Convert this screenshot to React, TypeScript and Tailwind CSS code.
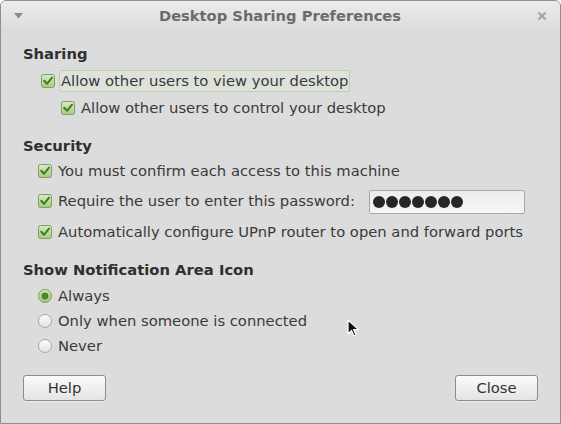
import React from 'react';

const Check: React.FC = () => (
  <svg width="14" height="14" viewBox="0 0 14 14" className="shrink-0">
    <defs>
      <linearGradient id="cbg" x1="0" y1="0" x2="0" y2="1">
        <stop offset="0" stopColor="#d9ecc6" />
        <stop offset="1" stopColor="#a6c982" />
      </linearGradient>
    </defs>
    <rect x="0.5" y="0.5" width="13" height="13" rx="2" fill="url(#cbg)" stroke="#7f9f60" />
    <path d="M3.2 6.8 L6 9.8 L11 3.6" fill="none" stroke="#3f7c22" strokeWidth="2" strokeLinecap="round" strokeLinejoin="round" />
  </svg>
);

const Radio: React.FC<{ on?: boolean }> = ({ on }) => (
  <svg width="14" height="14" viewBox="0 0 14 14" className="shrink-0">
    <defs>
      <linearGradient id="rg" x1="0" y1="0" x2="0" y2="1">
        <stop offset="0" stopColor="#cfe5b8" />
        <stop offset="1" stopColor="#98c273" />
      </linearGradient>
      <linearGradient id="rw" x1="0" y1="0" x2="0" y2="1">
        <stop offset="0" stopColor="#fdfdfd" />
        <stop offset="1" stopColor="#e2e2e2" />
      </linearGradient>
    </defs>
    <circle cx="7" cy="7" r="6.5" fill={on ? 'url(#rg)' : 'url(#rw)'} stroke={on ? '#7fa35e' : '#a6a6a6'} />
    {on && <circle cx="7" cy="7" r="3" fill="#4d8a30" stroke="#3a6b22" strokeWidth="0.8" />}
  </svg>
);

const Heading: React.FC<{ children: React.ReactNode; className?: string }> = ({ children, className }) => (
  <div className={`h-[20px] flex items-center font-bold text-[#2f2f2f] ${className ?? ''}`}>{children}</div>
);

const App: React.FC = () => {
  return (
    <div className="relative w-[561px] h-[424px] flex flex-col bg-[#dcdcdc] border border-[#8e8e8e] rounded-t-[6px] overflow-hidden font-['DejaVu_Sans',sans-serif] text-[14.75px] text-[#3a3a3a]">
      {/* title bar */}
      <div className="h-[29px] flex items-center justify-between px-[13px] bg-gradient-to-b from-[#ececec] to-[#dcdcdc]">
        <svg width="9" height="6" viewBox="0 0 9 6"><path d="M0 0 H9 L4.5 5.5 Z" fill="#8c8c8c" /></svg>
        <div className="font-bold text-[14.7px] text-[#6b6b6b] pt-[1px]">Desktop Sharing Preferences</div>
        <svg width="10" height="10" viewBox="0 0 10 10"><path d="M1.5 1.5 L8.5 8.5 M8.5 1.5 L1.5 8.5" stroke="#a2a2a2" strokeWidth="2" /></svg>
      </div>

      <div className="flex-1 flex flex-col pl-[22px] pr-[22px]">
        <Heading className="mt-[14px]">Sharing</Heading>
        <div className="mt-[6px] h-[22px] flex items-center pl-[18px]">
          <Check />
          <div className="ml-[4px] h-[22px] px-[1px] flex items-center border border-[#b9d6a1] rounded-[2px] bg-[#dee2db]">
            Allow other users to view your desktop
          </div>
        </div>
        <div className="mt-[5px] h-[22px] flex items-center gap-[6px] pl-[38px]">
          <Check />
          <span>Allow other users to control your desktop</span>
        </div>

        <Heading className="mt-[17px]">Security</Heading>
        <div className="mt-[2px] h-[26px] flex items-center gap-[6px] pl-[15px]">
          <Check />
          <span>You must confirm each access to this machine</span>
        </div>
        <div className="mt-[4px] h-[26px] flex items-center pl-[15px]">
          <Check />
          <span className="ml-[6px]">Require the user to enter this password:</span>
          <div className="ml-auto mr-[13px] mt-[2px] w-[156px] h-[24px] flex items-center gap-[1px] pl-[3px] border border-[#a9a9a9] rounded-[2px] bg-gradient-to-b from-[#ececec] to-[#f6f6f6]">
            {[0, 1, 2, 3, 4, 5, 6].map((i) => (
              <div key={i} className="w-[12px] h-[12px] rounded-full bg-[#262626]" />
            ))}
          </div>
        </div>
        <div className="mt-[5px] h-[26px] flex items-center gap-[6px] pl-[15px]">
          <Check />
          <span>Automatically configure UPnP router to open and forward ports</span>
        </div>

        <Heading className="mt-[15px]">Show Notification Area Icon</Heading>
        <div className="mt-[4px] h-[24px] flex items-center gap-[6px] pl-[15px]">
          <Radio on />
          <span>Always</span>
        </div>
        <div className="mt-[1px] h-[24px] flex items-center gap-[6px] pl-[15px]">
          <Radio />
          <span>Only when someone is connected</span>
        </div>
        <div className="mt-[1px] h-[24px] flex items-center gap-[6px] pl-[15px]">
          <Radio />
          <span>Never</span>
        </div>

        <div className="mt-[17px] flex justify-between">
          <button className="w-[83px] h-[26px] border border-[#8c8c8c] rounded-[3px] bg-gradient-to-b from-[#fbfbfb] to-[#e4e4e4] text-[#333] shadow-[0_1px_0_#ececec]">
            Help
          </button>
          <button className="w-[83px] h-[26px] border border-[#8c8c8c] rounded-[3px] bg-gradient-to-b from-[#fbfbfb] to-[#e4e4e4] text-[#333] shadow-[0_1px_0_#ececec]">
            Close
          </button>
        </div>
      </div>

      {/* mouse pointer */}
      <svg className="absolute left-[346px] top-[318px]" width="14" height="20" viewBox="0 0 14 20">
        <path d="M1 1 L1 15 L4.5 11.5 L7 17 L9 16 L6.6 10.6 L11.5 10.6 Z" fill="#111" stroke="#fff" strokeWidth="1.2" strokeLinejoin="round" />
      </svg>
    </div>
  );
};

export default App;
